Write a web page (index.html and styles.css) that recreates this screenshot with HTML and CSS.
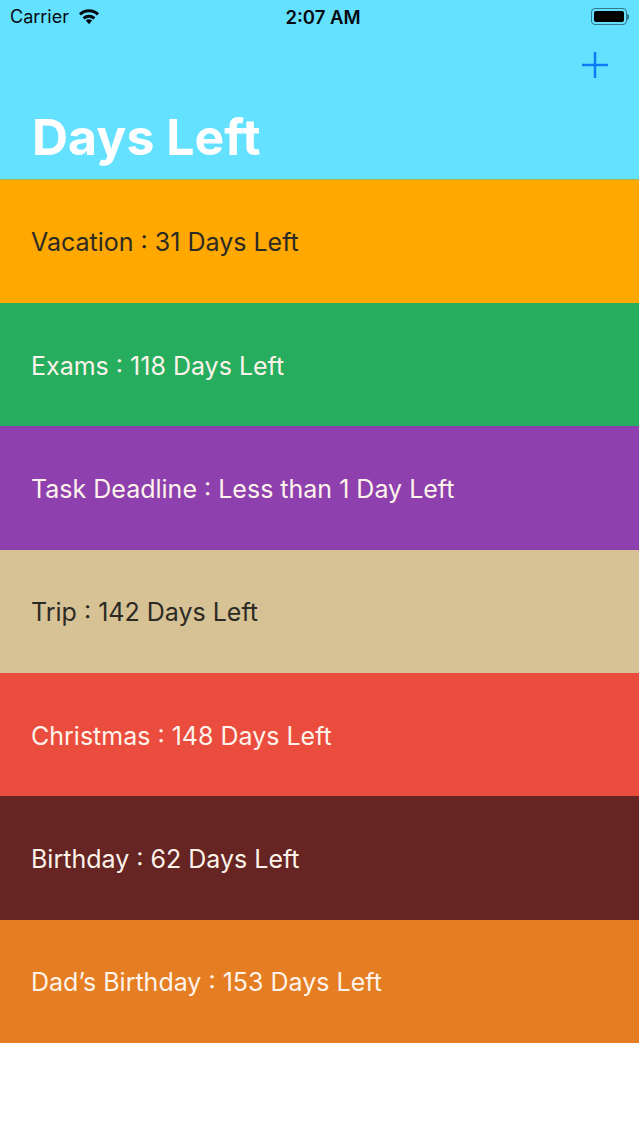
FILE: index.html
```html
<!DOCTYPE html>
<html lang="en">

<head>
    <meta charset="UTF-8" />
    <meta name="viewport" content="width=device-width, initial-scale=1.0" />
    <title>Days Left</title>
    <link rel="stylesheet" href="styles.css">
</head>

<body>
    <div class="header">
        <div class="status">
            <div class="status-left">
                <span class="carrier">Carrier</span>
                <svg class="wifi" width="22" height="16" viewBox="0 0 22 16">
                    <path class="wifi-arc" d="M2 5.300A13 13 0 0 1 20 5.300" />
                    <path class="wifi-arc" d="M5.600 9.300A8 8 0 0 1 16.400 9.300" />
                    <path class="wifi-dot" d="M7.800 11.600A4.600 4.600 0 0 1 14.200 11.600L11 15.200z" />
                </svg>
            </div>
            <span class="time">2:07 AM</span>
            <div class="status-right">
                <div class="battery">
                    <div class="battery-fill"></div>
                </div>
                <div class="battery-tip"></div>
            </div>
        </div>
        <div class="nav">
            <svg class="add" width="28" height="28" viewBox="0 0 28 28">
                <path d="M14 1v26M1 14h26" />
            </svg>
        </div>
        <h1>Days Left</h1>
    </div>

    <div class="list">
        <div class="row vacation">Vacation : 31 Days Left</div>
        <div class="row exams">Exams : 118 Days Left</div>
        <div class="row task">Task Deadline : Less than 1 Day Left</div>
        <div class="row trip">Trip : 142 Days Left</div>
        <div class="row christmas">Christmas : 148 Days Left</div>
        <div class="row birthday">Birthday : 62 Days Left</div>
        <div class="row dad">Dad’s Birthday : 153 Days Left</div>
    </div>
</body>

</html>
```

FILE: styles.css
```css
* {
    box-sizing: border-box;
}

body {
    margin: 0;
    background-color: white;
    font-family: Inter, "Liberation Sans", sans-serif;
}

.header {
    height: 179.500px;
    background-color: #64e1ff;
    border-bottom: 1px solid #a3b35c;
}

.status {
    display: flex;
    justify-content: space-between;
    align-items: center;
    height: 33px;
    padding: 0 10px;
    color: #050a10;
}

.status-left {
    display: flex;
    align-items: center;
    gap: 9px;
    width: 207px;
}

.carrier {
    font-size: 18px;
}

.wifi-arc {
    fill: none;
    stroke: #050a10;
    stroke-width: 3;
}

.wifi-dot {
    fill: #050a10;
}

.time {
    font-size: 18.500px;
    font-weight: 600;
}

.status-right {
    display: flex;
    align-items: center;
    justify-content: flex-end;
    width: 200px;
}

.battery {
    width: 36px;
    height: 17px;
    padding: 2px;
    border: 1px solid #33798c;
    border-radius: 4px;
}

.battery-fill {
    height: 100%;
    background-color: #000;
    border-radius: 2px;
}

.battery-tip {
    width: 2px;
    height: 6px;
    background-color: #33798c;
    border-radius: 0 2px 2px 0;
}

.nav {
    display: flex;
    justify-content: flex-end;
    height: 74px;
    padding: 0 30px 0 0;
}

.add {
    margin-top: 18px;
    stroke: #0a7cf5;
    stroke-width: 2.500;
    fill: none;
}

h1 {
    margin: 0;
    padding-left: 32px;
    font-size: 50px;
    font-weight: 700;
    line-height: 60px;
    color: white;
}

.row {
    display: flex;
    align-items: center;
    height: 123.350px;
    padding: 2px 0 0 31px;
    font-size: 25px;
    color: #fdf3ea;
}

.vacation {
    background-color: #ffa800;
    color: #2c2a24;
}

.exams {
    background-color: #26ad5e;
}

.task {
    background-color: #8e40ae;
}

.trip {
    background-color: #d7c295;
    color: #2c2a24;
}

.christmas {
    background-color: #ea4d3e;
}

.birthday {
    background-color: #662422;
}

.dad {
    background-color: #e57d23;
}
```
